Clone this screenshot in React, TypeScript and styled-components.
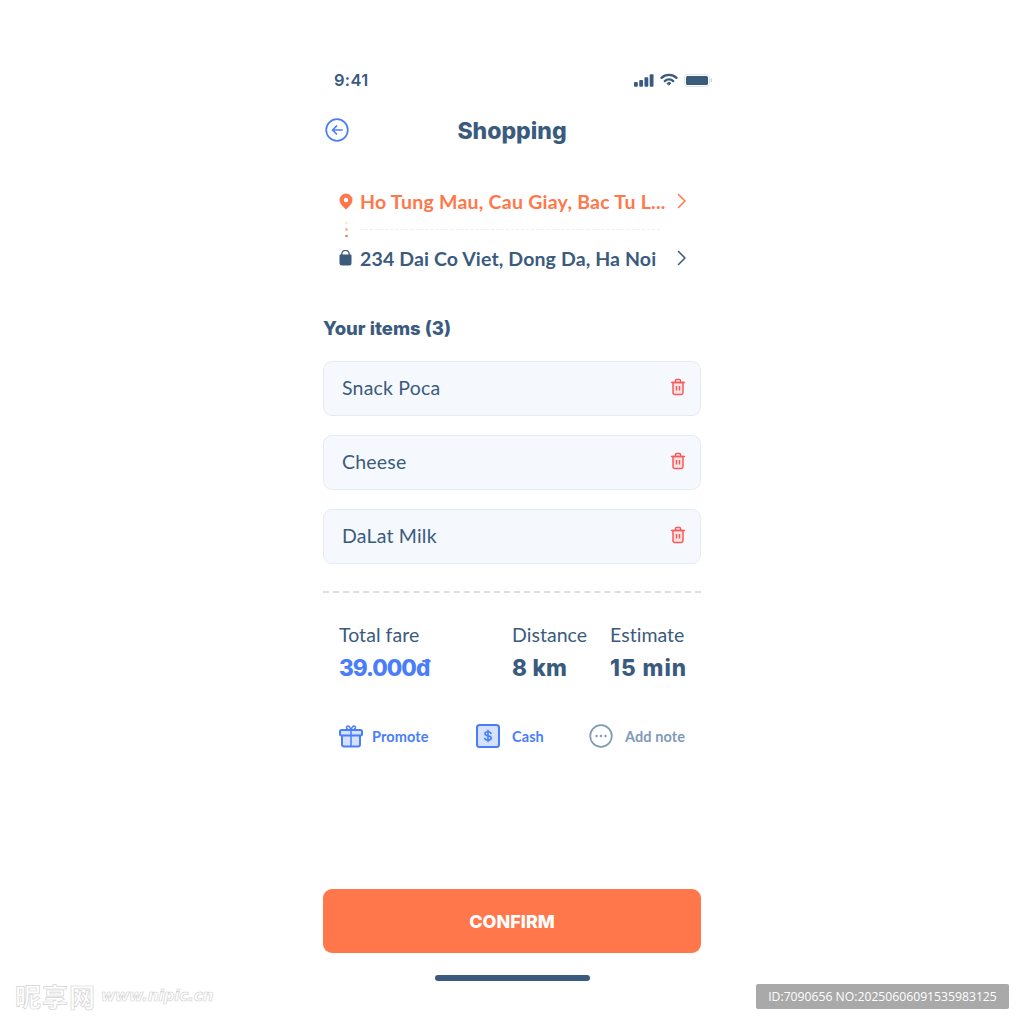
import React from "react";
import styled, { createGlobalStyle } from "styled-components";

const NAVY = "#3b5b7e";
const BLUE = "#4a7dfb";
const ORANGE = "#ff774a";
const RED = "#f9595a";
const HEAVY = `Inter, "Noto Sans", sans-serif`;

const GlobalStyle = createGlobalStyle`
  html, body {
    margin: 0;
    padding: 0;
    background: #fff;
    font-family: Lato, "Noto Sans", sans-serif;
    color: ${NAVY};
  }
`;

const Page = styled.div`
  position: relative;
  width: 1024px;
  height: 1024px;
  overflow: hidden;
  background: #fff;
`;

const Screen = styled.div`
  width: 378px;
  margin: 0 auto;
  padding-top: 68px;
  display: flex;
  flex-direction: column;
`;

const StatusBar = styled.div`
  height: 24px;
  margin: 0 -11px 0 11px;
  display: flex;
  align-items: center;
  justify-content: space-between;
`;

const Clock = styled.span`
  font-family: Inter, sans-serif;
  font-size: 16.5px;
  font-weight: 600;
  letter-spacing: 0.3px;
`;

const StatusIcons = styled.div`
  display: flex;
  align-items: center;
  gap: 6px;
`;

const Header = styled.div`
  position: relative;
  height: 40px;
  margin-top: 19px;
  display: flex;
  align-items: center;
  justify-content: center;
`;

const BackButton = styled.div`
  position: absolute;
  left: 2px;
  top: 7px;
  width: 24px;
  height: 24px;
`;

const Title = styled.h1`
  margin: 0;
  font-family: ${HEAVY};
  font-size: 23px;
  font-weight: 800;
  letter-spacing: 0;
`;

const Route = styled.div`
  margin-top: 36px;
  padding: 0 14px 0 16px;
  display: flex;
  flex-direction: column;
`;

const RouteRow = styled.div<{ $color: string }>`
  height: 28px;
  display: flex;
  align-items: center;
  color: ${(p) => p.$color};
`;

const RouteIcon = styled.div`
  width: 21px;
  flex: none;
  display: flex;
`;

const RouteText = styled.span<{ $tracking: number }>`
  flex: 1;
  font-size: 19.5px;
  font-weight: 700;
  letter-spacing: ${(p) => p.$tracking}px;
  white-space: nowrap;
`;

const RouteGap = styled.div`
  height: 29px;
  display: flex;
  align-items: center;
`;

const DotColumn = styled.div`
  width: 21px;
  flex: none;
  display: flex;
  flex-direction: column;
  gap: 4px;
  padding-left: 6px;
  box-sizing: border-box;
`;

const Dot = styled.i<{ $opacity: number }>`
  width: 2.5px;
  height: 2.5px;
  border-radius: 50%;
  background: ${ORANGE};
  opacity: ${(p) => p.$opacity};
`;

const RouteDivider = styled.div`
  width: 300px;
  border-top: 1px dashed #eceff3;
`;

const SectionTitle = styled.h2`
  margin: 42px 0 0;
  height: 28px;
  line-height: 28px;
  font-family: ${HEAVY};
  font-size: 18.5px;
  font-weight: 800;
  letter-spacing: 0;
`;

const ItemList = styled.div`
  margin-top: 19px;
  display: flex;
  flex-direction: column;
  gap: 19px;
`;

const Item = styled.div`
  height: 55px;
  box-sizing: border-box;
  padding: 0 14px 0 18px;
  display: flex;
  align-items: center;
  justify-content: space-between;
  background: #f5f9fd;
  border: 1.5px solid #e3ecf4;
  border-radius: 9px;
  font-size: 19.5px;
  letter-spacing: 0.2px;
  line-height: 22px;
`;

const ItemName = styled.span`
  margin-top: -2px;
`;

const TrashBox = styled.div`
  display: flex;
  margin-top: -3px;
`;

const Divider = styled.div`
  margin-top: 27px;
  height: 0;
  border-top: 2px dashed #d9dfe5;
`;

const Stats = styled.div`
  margin-top: 28px;
  padding-left: 16px;
  display: flex;
`;

const Stat = styled.div<{ $width: number }>`
  width: ${(p) => p.$width}px;
  display: flex;
  flex-direction: column;
`;

const StatLabel = styled.span`
  height: 28px;
  line-height: 28px;
  font-size: 19.5px;
  letter-spacing: 0.05px;
  white-space: nowrap;
`;

const StatValue = styled.span<{ $accent?: boolean; $tracking: number }>`
  height: 37px;
  line-height: 37px;
  font-family: ${HEAVY};
  font-size: 22.5px;
  font-weight: 800;
  letter-spacing: ${(p) => p.$tracking}px;
  white-space: nowrap;
  color: ${(p) => (p.$accent ? BLUE : NAVY)};
`;

const Actions = styled.div`
  margin-top: 33px;
  padding-left: 16px;
  height: 34px;
  display: flex;
  align-items: center;
`;

const Action = styled.div<{ $width: number; $muted?: boolean; $gap: number }>`
  width: ${(p) => p.$width}px;
  display: flex;
  align-items: center;
  gap: ${(p) => p.$gap}px;
  font-size: 14.5px;
  font-weight: 700;
  letter-spacing: 0.1px;
  white-space: nowrap;
  color: ${(p) => (p.$muted ? "#7f9ab8" : BLUE)};
`;

const ConfirmButton = styled.button`
  margin-top: 136px;
  height: 64px;
  border: 0;
  border-radius: 9px;
  background: ${ORANGE};
  color: #fff;
  font-family: ${HEAVY};
  font-size: 18px;
  font-weight: 800;
  letter-spacing: 0;
`;

const HomeBar = styled.div`
  align-self: center;
  width: 155px;
  height: 6px;
  margin-top: 22px;
  border-radius: 3px;
  background: ${NAVY};
`;

const SiteMark = styled.div`
  position: absolute;
  left: 15px;
  bottom: 10px;
  display: flex;
  align-items: center;
  gap: 5px;
  color: #fff;
  -webkit-text-stroke: 0.7px #d4d4d4;
`;

const SiteName = styled.span`
  font-family: "Noto Sans CJK SC", sans-serif;
  font-size: 26px;
  font-weight: 700;
  letter-spacing: 1px;
`;

const SiteUrl = styled.span`
  font-family: "DejaVu Sans", sans-serif;
  font-size: 15.5px;
  font-weight: 700;
  font-style: italic;
  letter-spacing: -0.3px;
`;

const IdBadge = styled.div`
  position: absolute;
  left: 756px;
  top: 984px;
  width: 253px;
  height: 25px;
  line-height: 25px;
  text-align: center;
  border-radius: 2px;
  background: #a9a9a9;
  color: #fff;
  font-family: "Open Sans", sans-serif;
  font-size: 12.2px;
  white-space: nowrap;
`;

const TrashIcon = () => (
  <svg width="16" height="18" viewBox="0 0 16 18" fill="none">
    <path d="M3 4.500h10v10.300a1.700 1.700 0 0 1-1.700 1.700H4.700A1.700 1.700 0 0 1 3 14.800z" fill="#fde3e3" stroke={RED} strokeWidth="1.500" />
    <path d="M1.500 4.500h13M5.500 4V2.600c0-.6.4-1 1-1h3c.6 0 1 .4 1 1V4" stroke={RED} strokeWidth="1.500" strokeLinecap="round" />
    <path d="M6.500 8v4.500M9.500 8v4.500" stroke={RED} strokeWidth="1.500" />
  </svg>
);

const Chevron = ({ color }: { color: string }) => (
  <svg width="10" height="16" viewBox="0 0 10 16" fill="none">
    <path d="M1.500 1.500 8 8l-6.500 6.500" stroke={color} strokeWidth="1.500" strokeLinecap="round" strokeLinejoin="round" />
  </svg>
);

const items = ["Snack Poca", "Cheese", "DaLat Milk"];

export default function App() {
  return (
    <Page>
      <GlobalStyle />
      <Screen>
        <StatusBar>
          <Clock>9:41</Clock>
          <StatusIcons>
            <svg width="20" height="13" viewBox="0 0 21 13" fill={NAVY}>
              <rect x="0" y="8" width="4" height="5" rx="1" />
              <rect x="5.500" y="6" width="4" height="7" rx="1" />
              <rect x="11" y="3" width="4" height="10" rx="1" />
              <rect x="16.500" y="0" width="4" height="13" rx="1" />
            </svg>
            <svg width="18" height="14" viewBox="0 0 18 14" fill="none" stroke={NAVY} strokeWidth="2.400" strokeLinecap="round">
              <path d="M1.500 4.800a11 11 0 0 1 15 0" />
              <path d="M4.800 8.100a6 6 0 0 1 8.400 0" />
              <path d="M9 12l1.800-1.800a2.500 2.500 0 0 0-3.600 0z" fill={NAVY} strokeWidth="1" strokeLinejoin="round" />
            </svg>
            <svg width="28" height="13" viewBox="0 0 28 13">
              <rect x="0.500" y="0.500" width="25" height="12" rx="3" fill="#fff" stroke="#dfe4ea" />
              <rect x="2" y="2" width="22" height="9" rx="1.500" fill={NAVY} />
              <rect x="26.500" y="4.500" width="1.500" height="4" rx="0.700" fill="#cfd6de" />
            </svg>
          </StatusIcons>
        </StatusBar>

        <Header>
          <BackButton>
            <svg width="24" height="24" viewBox="0 0 24 24" fill="none" stroke={BLUE} strokeWidth="1.700" strokeLinecap="round" strokeLinejoin="round">
              <circle cx="12" cy="12" r="10.800" />
              <path d="M17 12H7.500M11.500 8l-4 4 4 4" />
            </svg>
          </BackButton>
          <Title>Shopping</Title>
        </Header>

        <Route>
          <RouteRow $color={ORANGE}>
            <RouteIcon>
              <svg width="14" height="17" viewBox="0 0 14 17">
                <path fillRule="evenodd" d="M7 .500a6.500 6.500 0 0 1 6.500 6.500c0 3.500-3.500 6.800-6.500 9.500C4 13.800.500 10.500.500 7A6.500 6.500 0 0 1 7 .500zm0 4.300a2.200 2.200 0 1 0 0 4.400 2.200 2.200 0 0 0 0-4.400z" fill={ORANGE} />
              </svg>
            </RouteIcon>
            <RouteText $tracking={0.25}>Ho Tung Mau, Cau Giay, Bac Tu L...</RouteText>
            <Chevron color={ORANGE} />
          </RouteRow>
          <RouteGap>
            <DotColumn>
              <Dot $opacity={0.2} />
              <Dot $opacity={0.5} />
              <Dot $opacity={1} />
            </DotColumn>
            <RouteDivider />
          </RouteGap>
          <RouteRow $color={NAVY}>
            <RouteIcon>
              <svg width="13" height="16" viewBox="0 0 13 16">
                <path d="M2.800 5V4a3.700 3.700 0 0 1 7.400 0v1" fill="none" stroke={NAVY} strokeWidth="1.400" />
                <path d="M1.500 4.500h10c.6 0 1 .4 1 1V13a2.500 2.500 0 0 1-2.500 2.500H3A2.500 2.500 0 0 1 .500 13V5.500c0-.6.4-1 1-1z" fill={NAVY} />
              </svg>
            </RouteIcon>
            <RouteText $tracking={0.13}>234 Dai Co Viet, Dong Da, Ha Noi</RouteText>
            <Chevron color={NAVY} />
          </RouteRow>
        </Route>

        <SectionTitle>Your items (3)</SectionTitle>
        <ItemList>
          {items.map((name) => (
            <Item key={name}>
              <ItemName>{name}</ItemName>
              <TrashBox>
                <TrashIcon />
              </TrashBox>
            </Item>
          ))}
        </ItemList>

        <Divider />

        <Stats>
          <Stat $width={173}>
            <StatLabel>Total fare</StatLabel>
            <StatValue $accent $tracking={-1}>39.000đ</StatValue>
          </Stat>
          <Stat $width={98}>
            <StatLabel>Distance</StatLabel>
            <StatValue $tracking={0.3}>8 km</StatValue>
          </Stat>
          <Stat $width={80}>
            <StatLabel>Estimate</StatLabel>
            <StatValue $tracking={1}>15 min</StatValue>
          </Stat>
        </Stats>

        <Actions>
          <Action $width={137} $gap={9}>
            <svg width="24" height="24" viewBox="0 0 24 24" fill="none" stroke={BLUE} strokeWidth="2" strokeLinejoin="round">
              <path d="M3 11h18v9.500a2 2 0 0 1-2 2H5a2 2 0 0 1-2-2z" fill="#d5e2fe" />
              <rect x="1" y="6" width="22" height="5.500" rx="1.500" fill="#d5e2fe" />
              <path d="M12 6v16.500M12 6C9.500 6 7.500 5 7.500 3.300S10.500.800 12 6zm0 0c2.500 0 4.500-1 4.500-2.700S13.500.800 12 6z" strokeWidth="1.500" />
            </svg>
            Promote
          </Action>
          <Action $width={113} $gap={12}>
            <svg width="24" height="24" viewBox="0 0 24 24" fill="none">
              <rect x="1" y="1" width="22" height="22" rx="2.500" fill="#d5e2fe" stroke={BLUE} strokeWidth="2" />
              <path d="M15 9.300c-.5-1-1.500-1.500-3-1.500-1.800 0-3 .8-3 2 0 2.900 6.200 1.300 6.200 4.200 0 1.300-1.400 2.100-3.200 2.100-1.600 0-2.800-.6-3.300-1.700M12 6.400v11.200" stroke={BLUE} strokeWidth="1.600" strokeLinecap="round" />
            </svg>
            Cash
          </Action>
          <Action $width={100} $muted $gap={12}>
            <svg width="24" height="24" viewBox="0 0 24 24" fill="none">
              <circle cx="12" cy="12" r="10.800" stroke="#7f9ab8" strokeWidth="1.700" />
              <circle cx="7.500" cy="12" r="1.200" fill="#7f9ab8" />
              <circle cx="12" cy="12" r="1.200" fill="#7f9ab8" />
              <circle cx="16.500" cy="12" r="1.200" fill="#7f9ab8" />
            </svg>
            Add note
          </Action>
        </Actions>

        <ConfirmButton>CONFIRM</ConfirmButton>
        <HomeBar />
      </Screen>

      <SiteMark>
        <SiteName>昵享网</SiteName>
        <SiteUrl>www.nipic.cn</SiteUrl>
      </SiteMark>
      <IdBadge>ID:7090656 NO:20250606091535983125</IdBadge>
    </Page>
  );
}
